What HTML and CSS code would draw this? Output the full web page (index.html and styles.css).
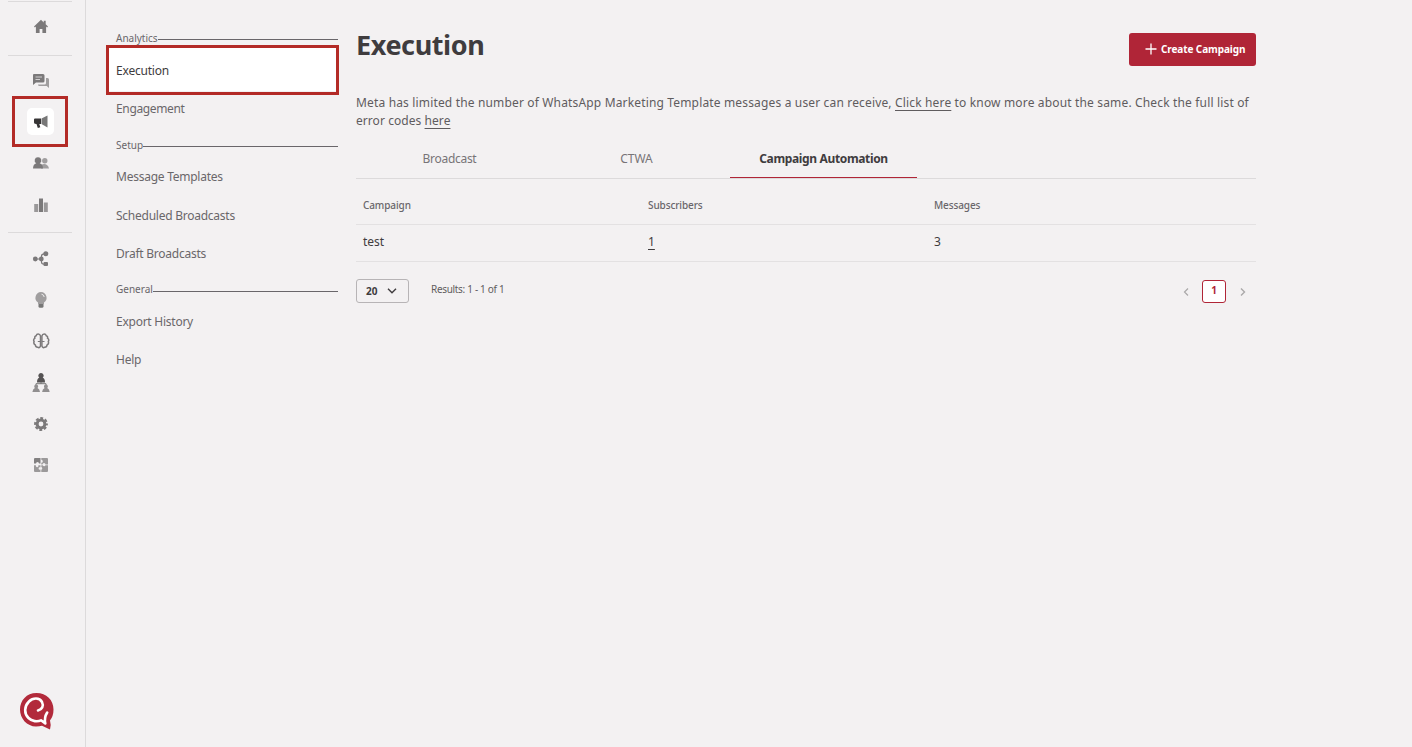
FILE: index.html
```html
<!DOCTYPE html>
<html lang="en">
<head>
<meta charset="utf-8">
<title>Execution</title>
<link rel="stylesheet" href="styles.css">
</head>
<body>
<div class="app">
  <nav class="rail">
    <a class="rail-item home"><svg width="16" height="16" viewBox="0 0 16 16"><path fill="#7b797a" d="M8 .8 1 7.400l.9 1 1-.9V14h3.700v-4h2.800v4h3.700V7.500l1 .9.9-1-2.300-2.200V1.800h-2v1.600z"/></svg></a>
    <hr class="rail-line">
    <a class="rail-item chat"><svg width="18" height="16" viewBox="0 0 18 16"><path fill="#a09e9f" d="M14 5h1.500q1.500 0 1.500 1.500V15l-2.300-2H7.500Q6 13 6 11.500h6.500Q14 11.500 14 10z"/><path fill="#7b797a" d="M2 1h9q1.500 0 1.500 1.500V8q0 1.500-1.500 1.500H4L1 12V2q0-1 1-1z"/><path stroke="#d0cecf" d="M3.500 4h6.500M3.500 6.500H8"/></svg></a>
    <a class="rail-item active"><span class="tile"><svg width="16" height="16" viewBox="0 0 16 16"><path fill="#777" d="M8.500 4.500 14.500 1.500v12L8.500 10z"/><path fill="#373536" d="M1 5.500Q1 4.500 2 4.500h6V10H6.300l1 3.200-2.500.8L3.500 10Q1 10 1 8.500z"/></svg></span></a>
    <a class="rail-item"><svg width="18" height="14" viewBox="0 0 18 14"><g fill="#a09e9f"><circle cx="12.800" cy="4.800" r="2.700"/><path d="M9 12.500V9q3.500-2 6 0 1.700 1 2 3.500z"/></g><path fill="#7b797a" d="M6 1.200a3.200 3.200 0 0 1 1.700 6Q11 8.300 11 12.500H1Q1 8.300 4.300 7.200A3.200 3.200 0 0 1 6 1.200z"/></svg></a>
    <a class="rail-item"><svg width="16" height="16" viewBox="0 0 16 16"><path fill="#9a9899" d="M1.200 7h4v8h-4zM10.800 5.500h4V15h-4z"/><path fill="#7b797a" d="M6 1.500h4V15H6z"/></svg></a>
    <hr class="rail-line second">
    <a class="rail-item flow"><svg width="18" height="18" viewBox="0 0 18 18"><g fill="#7b797a"><circle cx="3.300" cy="9" r="2.400"/><circle cx="9.300" cy="9" r="2.400"/><circle cx="13.800" cy="3.800" r="2.500"/><rect x="11.500" y="12" width="4.500" height="4" rx="1"/></g><path fill="none" stroke="#7b797a" stroke-width="1.200" d="M3 9h6.500V6q0-2.200 3-2.200M9.500 9v3q0 2.200 2.500 2.200"/></svg></a>
    <a class="rail-item"><svg width="16" height="18" viewBox="0 0 16 18"><path fill="#a09e9f" d="M8 1a5.800 5.800 0 0 0-3 10.600V13h6v-1.400A5.800 5.800 0 0 0 8 1z"/><path fill="#777" d="M5.500 13h5v2.300q0 1.500-1.500 1.500H7q-1.500 0-1.500-1.500z"/><path fill="none" stroke="#eee" d="M8.500 3.200q2.500.4 2.700 2.800"/></svg></a>
    <a class="rail-item"><svg width="18" height="18" viewBox="0 0 18 18"><g fill="none" stroke="#7b797a" stroke-width="1.500"><path d="M8.500 4Q8 2 6.200 2 4.600 2 4.200 3.700 2.300 4.200 2.900 6.200.9 7.500 2.100 9.500 1.200 12 3.300 12.900 3.600 15.300 5.700 15.200 7.500 16.500 8.500 14z"/><path d="M9.900 4q.5-2 2.300-2 1.600 0 2 1.700 1.900.5 1.300 2.500 2 1.300.8 3.300.9 2.500-1.200 3.400-.3 2.400-2.400 2.300-1.800 1.300-2.800-1.200z"/><path stroke-width="1.200" d="M5.800 9.500h2.700M9.900 9.500h2.600"/></g></svg></a>
    <a class="rail-item tree"><svg width="18" height="20" viewBox="0 0 18 20"><path fill="#555354" d="M9 0a2.600 2.600 0 0 1 1.700 4.600Q13 5.500 13 9.500H5Q5 5.500 7.300 4.600A2.600 2.600 0 0 1 9 0z"/><path fill="none" stroke="#777" d="M9 9v2M4 13v-2.300h10V13"/><path fill="#918f90" d="M4.200 11.500a2 2 0 0 1 1.300 3.500q2.200.8 2.500 4H.4q.3-3.200 2.500-4a2 2 0 0 1 1.300-3.500zM13.900 11.500a2 2 0 0 1 1.300 3.500q2.200.8 2.500 4h-7.600q.3-3.200 2.500-4a2 2 0 0 1 1.300-3.500z"/></svg></a>
    <a class="rail-item"><svg width="16" height="16" viewBox="0 0 16 16"><circle cx="8" cy="8" r="3.900" fill="none" stroke="#7b797a" stroke-width="3"/><circle cx="8" cy="8" r="5.900" fill="none" stroke="#7b797a" stroke-width="2" stroke-dasharray="2.900 1.734" stroke-dashoffset="1.450"/></svg></a>
    <a class="rail-item puzzle"><svg width="16" height="16" viewBox="0 0 16 16"><path fill="#828081" d="M1 2q0-1 1-1h5.500v5.500H6a1.500 1.500 0 0 0-3 0H1z"/><path fill="#9b999a" d="M8.300 1H14q1 0 1 1v5.500h-2.500a1.500 1.500 0 0 0-3 0H8.300V5.700a1.500 1.500 0 0 0 0-3zM1 8.300h2a1.300 1.300 0 1 0 2.300 0h2.200v2a1.300 1.300 0 1 0 0 2.300V15H2q-1 0-1-1zM8.300 8.300h1.500a1.500 1.500 0 0 0 2.700 0H15V14q0 1-1 1H8.300v-2.200a1.500 1.500 0 0 0 0-2.800z"/></svg></a>
    <svg class="logo" width="36" height="38" viewBox="0 0 36 38"><path fill="#b22a3b" d="M17.500 0C7.500 0 1 7.500 1 16.500S8 33.500 17 33.500q3.500 0 6-.8L31 36.500q1.500-4 0-9Q34.500 23 34.500 16.500C34.500 7 27.500 0 17.500 0z"/><path fill="none" stroke="#fff" stroke-width="2.600" stroke-linecap="round" stroke-linejoin="round" d="M19 17.500C23 16.500 25 13 23 9 20.500 4.500 14 4.500 10 8.500 5 13.500 5 20.500 9.500 25 13 28.500 18.500 29 22 27.300L26.300 30.500Q25 24.500 28.200 19.500"/></svg>
  </nav>
  <aside class="side">
    <h2 class="group first">Analytics</h2>
    <a class="link current"><span>Execution</span></a>
    <a class="link engagement"><span>Engagement</span></a>
    <h2 class="group setup">Setup</h2>
    <a class="link"><span>Message Templates</span></a>
    <a class="link"><span>Scheduled Broadcasts</span></a>
    <a class="link"><span>Draft Broadcasts</span></a>
    <h2 class="group general">General</h2>
    <a class="link"><span>Export History</span></a>
    <a class="link"><span>Help</span></a>
  </aside>
  <main class="main">
    <header class="head">
      <h1 class="title">Execution</h1>
      <button class="create"><svg width="12" height="12" viewBox="0 0 12 12"><path stroke="#fff" stroke-width="1.300" d="M6 .5v11M.5 6h11"/></svg><span>Create Campaign</span></button>
    </header>
    <p class="notice"><span class="notice-first">Meta has limited the number of WhatsApp Marketing Template messages a user can receive, <a class="ref">Click here</a> to know more about the same. Check the full list of</span><br>error codes <a class="ref">here</a></p>
    <div class="tabs"><a class="tab">Broadcast</a><a class="tab">CTWA</a><a class="tab selected">Campaign Automation</a></div>
    <div class="row labels"><span>Campaign</span><span>Subscribers</span><span>Messages</span></div>
    <div class="row values"><span>test</span><span><a class="count">1</a></span><span>3</span></div>
    <footer class="foot">
      <div class="select">20<svg width="10" height="8" viewBox="0 0 10 8"><path fill="none" stroke="#3f3c3e" stroke-width="1.400" d="M1 1.800 5 5.800l4-4"/></svg></div>
      <span class="results">Results: 1 - 1 of 1</span>
      <div class="pager"><svg width="6" height="8" viewBox="0 0 6 8"><path fill="none" stroke="#aaa8a9" stroke-width="1.200" d="M5 .5 1.500 4 5 7.500"/></svg><span class="page">1</span><svg width="6" height="8" viewBox="0 0 6 8"><path fill="none" stroke="#aaa8a9" stroke-width="1.400" d="M1 .5 4.500 4 1 7.500"/></svg></div>
    </footer>
  </main>
</div>
</body>
</html>
```
FILE: styles.css
```css
*, *::before, *::after { box-sizing: border-box; }
body { margin: 0; background: #f3f1f2; color: #5f5c5e; font-family: "Noto Sans", sans-serif; font-size: 12px; }
.app { display: flex; height: 747px; overflow: hidden; }
.rail { width: 86px; height: 747px; border-right: 1px solid #dcdadb; display: flex; flex-direction: column; padding-left: 8px; }
.rail-item { width: 64px; height: 41.300px; flex: none; display: flex; align-items: center; justify-content: center; padding-left: 1px; }
.rail-item svg { display: block; }
.home { height: 55px; border-top: 1px solid #dcdadb; margin-top: 1px; padding-bottom: 5px; }
.rail-line { width: 64px; height: 1px; flex: none; margin: -1px 0 4px; border: 0; background: #dcdadb; }
.rail-line.second { margin: 7px 0 5px; }
.active { position: relative; }
.active::after { content: ""; position: absolute; left: 4px; top: -5px; width: 56px; height: 51px; border: 3px solid #b32b27; }
.tile { width: 27px; height: 27px; border-radius: 5px; background: #fff; display: flex; align-items: center; justify-content: center; }
.logo { margin: auto 0 16px 11px; flex: none; }
.side { width: 270px; padding: 23px 18px 0 22px; }
.group { margin: 0; height: 30px; padding-left: 8px; display: flex; align-items: center; font-size: 10px; font-weight: 400; line-height: 14px; color: #69666a; }
.group::after { content: ""; flex: 1; height: 1px; background: #69666a; margin-top: 3px; }
.general::after { margin-top: 4px; }
.link { display: flex; align-items: center; height: 38.300px; padding: 0 0 4px 8px; color: #6a676a; letter-spacing: -.25px; }
.engagement { padding-bottom: 3px; letter-spacing: -.35px; }
.current { position: relative; padding-bottom: 3px; background: #fff; color: #3f3c3e; letter-spacing: -.2px; }
.current::after { content: ""; position: absolute; left: -2px; top: -8px; width: 233px; height: 50px; border: 3px solid #b32b27; }
.current::before { content: ""; position: absolute; inset: -7px 0 0 0; background: #fff; }
.current span { position: relative; }
.main { width: 900px; }
.head { display: flex; justify-content: space-between; height: 66px; padding-top: 25px; }
.title { margin: 0; font-size: 27px; line-height: 40px; font-weight: 700; letter-spacing: -.4px; color: #3f3c3e; }
.create { margin-top: 8px; width: 127px; height: 33px; padding: 0 10px 2px 16px; border: 0; border-radius: 3px; background: #b02537; color: #fff; font: 700 10px "Noto Sans", sans-serif; letter-spacing: -.1px; display: flex; align-items: center; gap: 4px; white-space: nowrap; }
.notice { margin: 28px 0 0; line-height: 18px; white-space: nowrap; letter-spacing: .06px; }
.notice-first { letter-spacing: .158px; }
.ref, .count { text-decoration: underline; text-underline-offset: 3px; }
.tabs { display: flex; height: 49px; border-bottom: 1px solid #dcdadb; }
.tab { width: 187px; height: 48px; padding-top: 20px; text-align: center; line-height: 18px; letter-spacing: -.3px; color: #777477; }
.tab:nth-child(2) { letter-spacing: 0; }
.tab.selected { color: #3f3c3e; font-weight: 700; letter-spacing: -.35px; background: linear-gradient(#b02537, #b02537) bottom / 100% 1px no-repeat; }
.row { display: grid; grid-template-columns: 285px 286px 1fr; align-items: center; padding-left: 7px; border-bottom: 1px solid #e3e1e2; }
.labels { height: 46px; padding-top: 7px; font-size: 10px; font-weight: 500; letter-spacing: -.1px; color: #69666a; }
.values { height: 37px; padding-bottom: 3px; color: #3f3c3e; }
.foot { display: flex; padding-top: 17px; align-items: flex-start; }
.select { width: 53px; height: 24px; border: 1px solid #b7b4b6; border-radius: 3px; display: flex; align-items: center; gap: 10px; padding-left: 9px; font-size: 10px; font-weight: 700; color: #3f3c3e; }
.results { margin-left: 22px; line-height: 21px; font-size: 10px; letter-spacing: -.32px; }
.pager { margin-left: auto; display: flex; align-items: center; gap: 13px; padding: 1px 10px 0 0; }
.page { width: 24px; height: 23px; margin-right: 1px; border: 1px solid #b02537; border-radius: 3px; background: #fff; color: #b02537; font-size: 10px; font-weight: 700; line-height: 19px; text-align: center; }
```
